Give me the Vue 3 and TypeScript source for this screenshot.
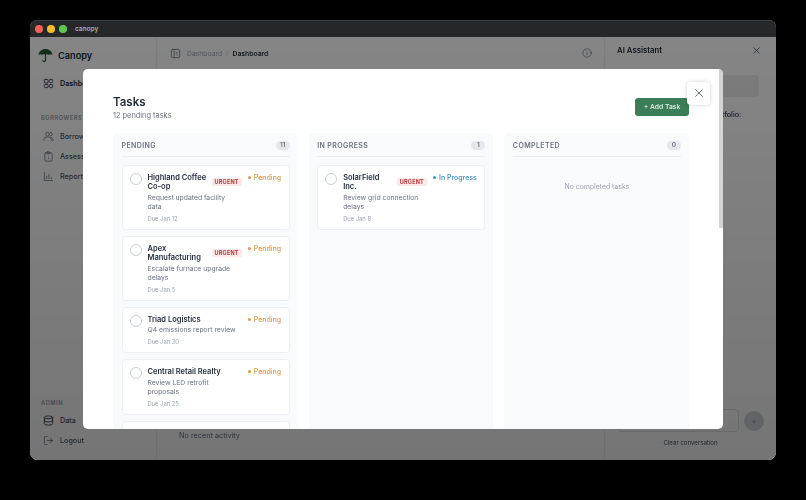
<script setup lang="ts">
import { computed } from 'vue'

interface Task {
  id: number
  name: string
  desc: string
  due: string
  urgent?: boolean
}

const pending: Task[] = [
  { id: 1, name: 'Highland Coffee Co-op', desc: 'Request updated facility data', due: 'Due Jan 12', urgent: true },
  { id: 2, name: 'Apex Manufacturing', desc: 'Escalate furnace upgrade delays', due: 'Due Jan 5', urgent: true },
  { id: 3, name: 'Triad Logistics', desc: 'Q4 emissions report review', due: 'Due Jan 30' },
  { id: 4, name: 'Central Retail Realty', desc: 'Review LED retrofit proposals', due: 'Due Jan 25' },
  { id: 5, name: 'Harbor Foods', desc: 'Confirm audit schedule', due: 'Due Feb 2' },
]

const inProgress: Task[] = [
  { id: 6, name: 'SolarField Inc.', desc: 'Review grid connection delays', due: 'Due Jan 8', urgent: true },
]

const columns = computed(() => [
  { title: 'PENDING', count: 11, status: 'Pending', kind: 'pending', tasks: pending },
  { title: 'IN PROGRESS', count: 1, status: 'In Progress', kind: 'progress', tasks: inProgress },
  { title: 'COMPLETED', count: 0, status: 'Completed', kind: 'done', tasks: [] as Task[] },
])
</script>

<template>
  <div class="desktop">
    <div class="window">
      <div class="titlebar">
        <span class="dot red"></span>
        <span class="dot yellow"></span>
        <span class="dot green"></span>
        <span class="app-name">canopy</span>
      </div>

      <div class="app">
        <aside class="sidebar">
          <div class="logo">
            <svg width="15" height="15" viewBox="0 0 16 16">
              <path d="M0.5 7.500C1 3.500 4 1 8 1s7 2.500 7.500 6.500c-1.500-1-3-1-3.700 0-1-1-2.600-1-3.800 0-1.200-1-2.800-1-3.800 0-.7-1-2.200-1-3.700 0z" fill="#1f5a32" />
              <path d="M8 6v7.200c0 1.600-2.600 1.600-2.800 0" fill="none" stroke="#1f5a32" stroke-width="1.200" stroke-linecap="round" />
            </svg>
            <span>Canopy</span>
          </div>

          <a class="nav-item strong">
            <svg width="11" height="11" viewBox="0 0 24 24" class="ico">
              <rect x="3" y="3" width="8" height="8" rx="2" />
              <rect x="14" y="3" width="7" height="7" rx="2" />
              <rect x="3" y="14" width="8" height="7" rx="2" />
              <rect x="14" y="14" width="7" height="7" rx="2" />
            </svg>
            Dashboard
          </a>

          <div class="nav-label first">BORROWERS</div>
          <a class="nav-item">
            <svg width="11" height="11" viewBox="0 0 24 24" class="ico thin">
              <circle cx="10" cy="7" r="4" />
              <path d="M2 21v-2a6 6 0 0 1 6-6h4a6 6 0 0 1 6 6v2M16 3a4 4 0 0 1 0 8M22 21v-2a5 5 0 0 0-3-4.500" />
            </svg>
            Borrowers
          </a>
          <a class="nav-item">
            <svg width="11" height="11" viewBox="0 0 24 24" class="ico thin">
              <rect x="4" y="4" width="16" height="18" rx="2" />
              <rect x="9" y="2" width="6" height="4" rx="1" />
              <path d="M12 11h.01M12 15v2" />
            </svg>
            Assessments
          </a>
          <a class="nav-item">
            <svg width="11" height="11" viewBox="0 0 24 24" class="ico thin">
              <path d="M3 3v18h18M8 17v-5M13 17V7M18 17v-3" />
            </svg>
            Reports
          </a>

          <div class="spacer"></div>

          <div class="nav-label">ADMIN</div>
          <a class="nav-item">
            <svg width="11" height="11" viewBox="0 0 24 24" class="ico">
              <ellipse cx="12" cy="5" rx="9" ry="3" />
              <path d="M3 5v14c0 1.700 4 3 9 3s9-1.300 9-3V5M3 12c0 1.700 4 3 9 3s9-1.300 9-3" />
            </svg>
            Data
          </a>
          <a class="nav-item">
            <svg width="11" height="11" viewBox="0 0 24 24" class="ico thin">
              <path d="M9 21H5a2 2 0 0 1-2-2V5a2 2 0 0 1 2-2h4M16 17l5-5-5-5M21 12H9" />
            </svg>
            Logout
          </a>
        </aside>

        <main class="main">
          <header class="topbar">
            <svg width="11" height="11" viewBox="0 0 24 24" class="ico thin">
              <rect x="3" y="3" width="18" height="18" rx="2" />
              <path d="M9 3v18M16 9l-3 3 3 3" />
            </svg>
            <span class="crumb">Dashboard</span>
            <span class="crumb sep">/</span>
            <span class="crumb current">Dashboard</span>
            <svg class="ico thin info" width="10" height="10" viewBox="0 0 24 24">
              <circle cx="12" cy="12" r="10" />
              <path d="M12 16v-4M12 8h.01" />
            </svg>
          </header>
          <div class="main-body">
            <p class="no-activity">No recent activity</p>
          </div>
        </main>

        <aside class="assistant">
          <div class="assistant-head">
            <span>AI Assistant</span>
            <svg width="9" height="9" viewBox="0 0 24 24" class="ico">
              <path d="M5 5l14 14M19 5L5 19" />
            </svg>
          </div>
          <div class="assistant-body">
            <div class="assistant-banner"></div>
            <p class="assistant-text">Here is a summary of your portfolio:</p>
          </div>
          <div class="assistant-foot">
            <div class="input-row">
              <div class="chat-input"></div>
              <div class="send">+</div>
            </div>
            <div class="clear">Clear conversation</div>
          </div>
        </aside>

        <div class="overlay">
          <section class="modal">
            <div class="modal-scroll">
              <div class="modal-head">
                <div>
                  <h2>Tasks</h2>
                  <p>12 pending tasks</p>
                </div>
                <button class="add-btn">+ Add Task</button>
              </div>

              <div class="board">
                <div v-for="col in columns" :key="col.title" class="column">
                  <div class="col-head">
                    <span class="col-title">{{ col.title }}</span>
                    <span class="col-count">{{ col.count }}</span>
                  </div>

                  <div v-for="task in col.tasks" :key="task.id" class="card">
                    <span class="check"></span>
                    <div class="card-body">
                      <div class="title-row">
                        <span class="task-name">{{ task.name }}</span>
                        <span v-if="task.urgent" class="urgent">URGENT</span>
                      </div>
                      <div class="task-desc">{{ task.desc }}</div>
                      <div class="task-due">{{ task.due }}</div>
                    </div>
                    <span class="status" :class="col.kind">{{ col.status }}</span>
                  </div>

                  <div v-if="!col.tasks.length" class="empty">No completed tasks</div>
                </div>
              </div>
            </div>
            <div class="scroll-thumb"></div>
            <button class="close-btn" aria-label="Close">
              <svg width="10" height="10" viewBox="0 0 24 24">
                <path d="M4 4l16 16M20 4L4 20" fill="none" stroke="#4b5563" stroke-width="2" stroke-linecap="round" />
              </svg>
            </button>
          </section>
        </div>
      </div>
    </div>
  </div>
</template>

<style>
html,
body {
  margin: 0;
  background: #000;
}
</style>

<style scoped>
.desktop {
  width: 806px;
  height: 500px;
  box-sizing: border-box;
  padding: 20px 30px 40px;
  background: #000;
  overflow: hidden;
  font-family: Inter, "Liberation Sans", sans-serif;
}

.window {
  height: 100%;
  display: flex;
  flex-direction: column;
  border-radius: 8px;
  overflow: hidden;
  background: #fff;
  box-shadow: inset 0 0 0 1px #3a3b3d;
  filter: blur(0.3px);
}

.titlebar {
  height: 17px;
  flex-shrink: 0;
  display: flex;
  align-items: center;
  gap: 4.500px;
  padding-left: 5px;
  background: #262729;
  border-top: 1px solid #3c3d3f;
  box-sizing: border-box;
}

.dot {
  width: 7.500px;
  height: 7.500px;
  border-radius: 50%;
}
.red { background: #f2605a; }
.yellow { background: #f5bb30; }
.green { background: #5ac84e; }

.app-name {
  margin-left: 4px;
  color: #a9abae;
  font-size: 6.500px;
  font-weight: 600;
}

.app {
  flex: 1;
  min-height: 0;
  position: relative;
  display: flex;
  background: #fff;
}

.sidebar {
  width: 127px;
  flex-shrink: 0;
  display: flex;
  flex-direction: column;
  box-sizing: border-box;
  padding: 11px 8px 10px;
  border-right: 1px solid #f0f0f0;
  color: #374151;
}

.logo {
  display: flex;
  align-items: center;
  gap: 5px;
  margin-bottom: 10px;
  font-size: 9.200px;
  font-weight: 600;
  color: #1f2937;
}

.nav-item {
  display: flex;
  align-items: center;
  gap: 6px;
  height: 20px;
  padding-left: 5px;
  font-size: 7.200px;
  font-weight: 500;
  color: #4b5563;
}
.nav-item.strong {
  font-weight: 600;
  color: #1f2937;
}

.nav-label {
  margin-bottom: 4px;
  padding-left: 3px;
  font-size: 5.600px;
  font-weight: 600;
  letter-spacing: 0.6px;
  color: #9ca3af;
}
.nav-label.first {
  margin-top: 22px;
  margin-bottom: 5px;
}

.spacer {
  flex: 1;
}

.ico {
  flex-shrink: 0;
  fill: none;
  stroke: #374151;
  stroke-width: 2;
  stroke-linecap: round;
  stroke-linejoin: round;
}
.ico.thin {
  stroke: #6b7280;
  stroke-width: 1.700;
}

.main {
  flex: 1;
  display: flex;
  flex-direction: column;
  min-width: 0;
  border-right: 1px solid #f0f0f0;
}

.topbar {
  height: 32px;
  flex-shrink: 0;
  display: flex;
  align-items: center;
  gap: 6px;
  padding: 0 12px 0 13px;
  border-bottom: 1px solid #f0f0f0;
}

.crumb {
  font-size: 6.800px;
  color: #9ca3af;
}
.crumb.sep {
  margin: 0 -2px;
  color: #d1d5db;
}
.crumb.current {
  font-weight: 600;
  color: #1f2937;
}
.info {
  margin-left: auto;
}

.main-body {
  flex: 1;
  display: flex;
  flex-direction: column;
  justify-content: flex-end;
  padding: 0 22px 20px;
}

.no-activity {
  margin: 0;
  font-size: 7.300px;
  color: #6b7280;
}

.assistant {
  width: 171px;
  flex-shrink: 0;
  display: flex;
  flex-direction: column;
}

.assistant-head {
  height: 26px;
  display: flex;
  align-items: center;
  justify-content: space-between;
  padding: 0 15px 2px 12px;
  font-size: 7.800px;
  font-weight: 600;
  color: #1f2937;
}

.assistant-body {
  flex: 1;
  padding: 10px 17px 0 12px;
}

.assistant-banner {
  height: 22px;
  border-radius: 4px;
  background: #eeeeee;
}

.assistant-text {
  margin: 13px 0 0;
  font-size: 7.250px;
  font-weight: 500;
  color: #374151;
}

.assistant-foot {
  padding: 0 12px 14px;
}

.input-row {
  display: flex;
  align-items: center;
  gap: 5px;
}

.chat-input {
  flex: 1;
  height: 23px;
  box-sizing: border-box;
  border: 1px solid #e0e0e0;
  border-radius: 4px;
}

.send {
  width: 20px;
  height: 20px;
  border-radius: 50%;
  background: #d1d5db;
  color: #9ca3af;
  display: flex;
  align-items: center;
  justify-content: center;
  font-size: 9px;
}

.clear {
  margin-top: 7px;
  text-align: center;
  font-size: 6.100px;
  color: #4b5563;
}

.overlay {
  position: absolute;
  inset: 0;
  display: flex;
  align-items: center;
  justify-content: center;
  background: linear-gradient(rgba(0, 0, 0, 0.48), rgba(0, 0, 0, 0.54));
}

.modal {
  position: relative;
  width: 640px;
  height: 360px;
  overflow: hidden;
  border-radius: 5px;
  background: #fff;
}

.modal-scroll {
  padding: 26.500px 34px 0 30px;
}

.modal-head {
  display: flex;
  align-items: flex-end;
  justify-content: space-between;
  margin-bottom: 12px;
}

.modal-head h2 {
  margin: 0 0 0.500px;
  font-size: 11.500px;
  line-height: 15px;
  font-weight: 600;
  color: #1f2937;
}

.modal-head p {
  margin: 0;
  font-size: 7.400px;
  line-height: 10px;
  color: #6b7280;
}

.add-btn {
  width: 54px;
  height: 18px;
  margin-bottom: 5px;
  padding: 0;
  border: 0;
  border-radius: 3px;
  background: #3b7d57;
  color: #e8f3ec;
  font-family: inherit;
  font-size: 6.800px;
  font-weight: 500;
}

.close-btn {
  position: absolute;
  top: 13px;
  right: 13px;
  width: 23px;
  height: 23px;
  padding: 0;
  display: flex;
  align-items: center;
  justify-content: center;
  border: 0;
  border-radius: 4px;
  background: #fff;
  box-shadow: 0 0 4px rgba(0, 0, 0, 0.18);
}

.scroll-thumb {
  position: absolute;
  top: 0;
  right: 0;
  width: 4px;
  height: 159px;
  background: #d4d4d4;
}

.board {
  display: grid;
  grid-template-columns: repeat(3, minmax(0, 1fr));
  gap: 11px;
}

.column {
  min-height: 330px;
  padding: 0 8px 8px 8.500px;
  border-radius: 5px;
  background: #f9fafb;
}

.col-head {
  height: 24px;
  box-sizing: border-box;
  padding-top: 2.500px;
  display: flex;
  align-items: center;
  justify-content: space-between;
  margin-bottom: 8.500px;
  border-bottom: 1px solid #eceef1;
}

.col-title {
  font-size: 7px;
  font-weight: 600;
  letter-spacing: 0.4px;
  color: #6b7280;
}

.col-count {
  min-width: 14px;
  height: 9px;
  line-height: 9px;
  border-radius: 5px;
  background: #e5e7eb;
  text-align: center;
  font-size: 6.500px;
  font-weight: 600;
  color: #6b7280;
}

.card {
  display: flex;
  align-items: flex-start;
  gap: 6px;
  margin-bottom: 6px;
  padding: 6.500px 7.500px 6px 7px;
  border: 1px solid #eef0f3;
  border-radius: 4px;
  background: #fff;
}

.check {
  width: 12px;
  height: 12px;
  flex-shrink: 0;
  border: 1px solid #c9ced6;
  border-radius: 50%;
  box-sizing: border-box;
}

.card-body {
  flex: 1;
  min-width: 0;
}

.title-row {
  display: flex;
  align-items: center;
  gap: 5px;
}

.task-name {
  flex: 1;
  font-size: 7.500px;
  line-height: 9.250px;
  font-weight: 600;
  color: #1f2937;
}

.urgent {
  flex-shrink: 0;
  padding: 0 3px;
  height: 8px;
  line-height: 8px;
  border-radius: 1.500px;
  background: #fde8e8;
  font-size: 5.500px;
  font-weight: 700;
  letter-spacing: 0.2px;
  color: #b03a3a;
}

.task-desc {
  margin-top: 1.500px;
  padding-right: 4px;
  font-size: 6.800px;
  line-height: 9.500px;
  color: #6b7280;
}

.task-due {
  margin-top: 2.500px;
  font-size: 5.800px;
  line-height: 9px;
  color: #9ca3af;
}

.status {
  flex-shrink: 0;
  display: flex;
  align-items: center;
  font-size: 7px;
  line-height: 9.500px;
  font-weight: 500;
  white-space: nowrap;
}
.status::before {
  content: "";
  width: 3px;
  height: 3px;
  margin-right: 3px;
  border-radius: 50%;
  background: currentColor;
}
.status.pending { color: #e09a45; }
.status.progress { color: #3f8fc9; }

.empty {
  margin-top: 25px;
  text-align: center;
  font-size: 6.900px;
  color: #9ca3af;
}
</style>
